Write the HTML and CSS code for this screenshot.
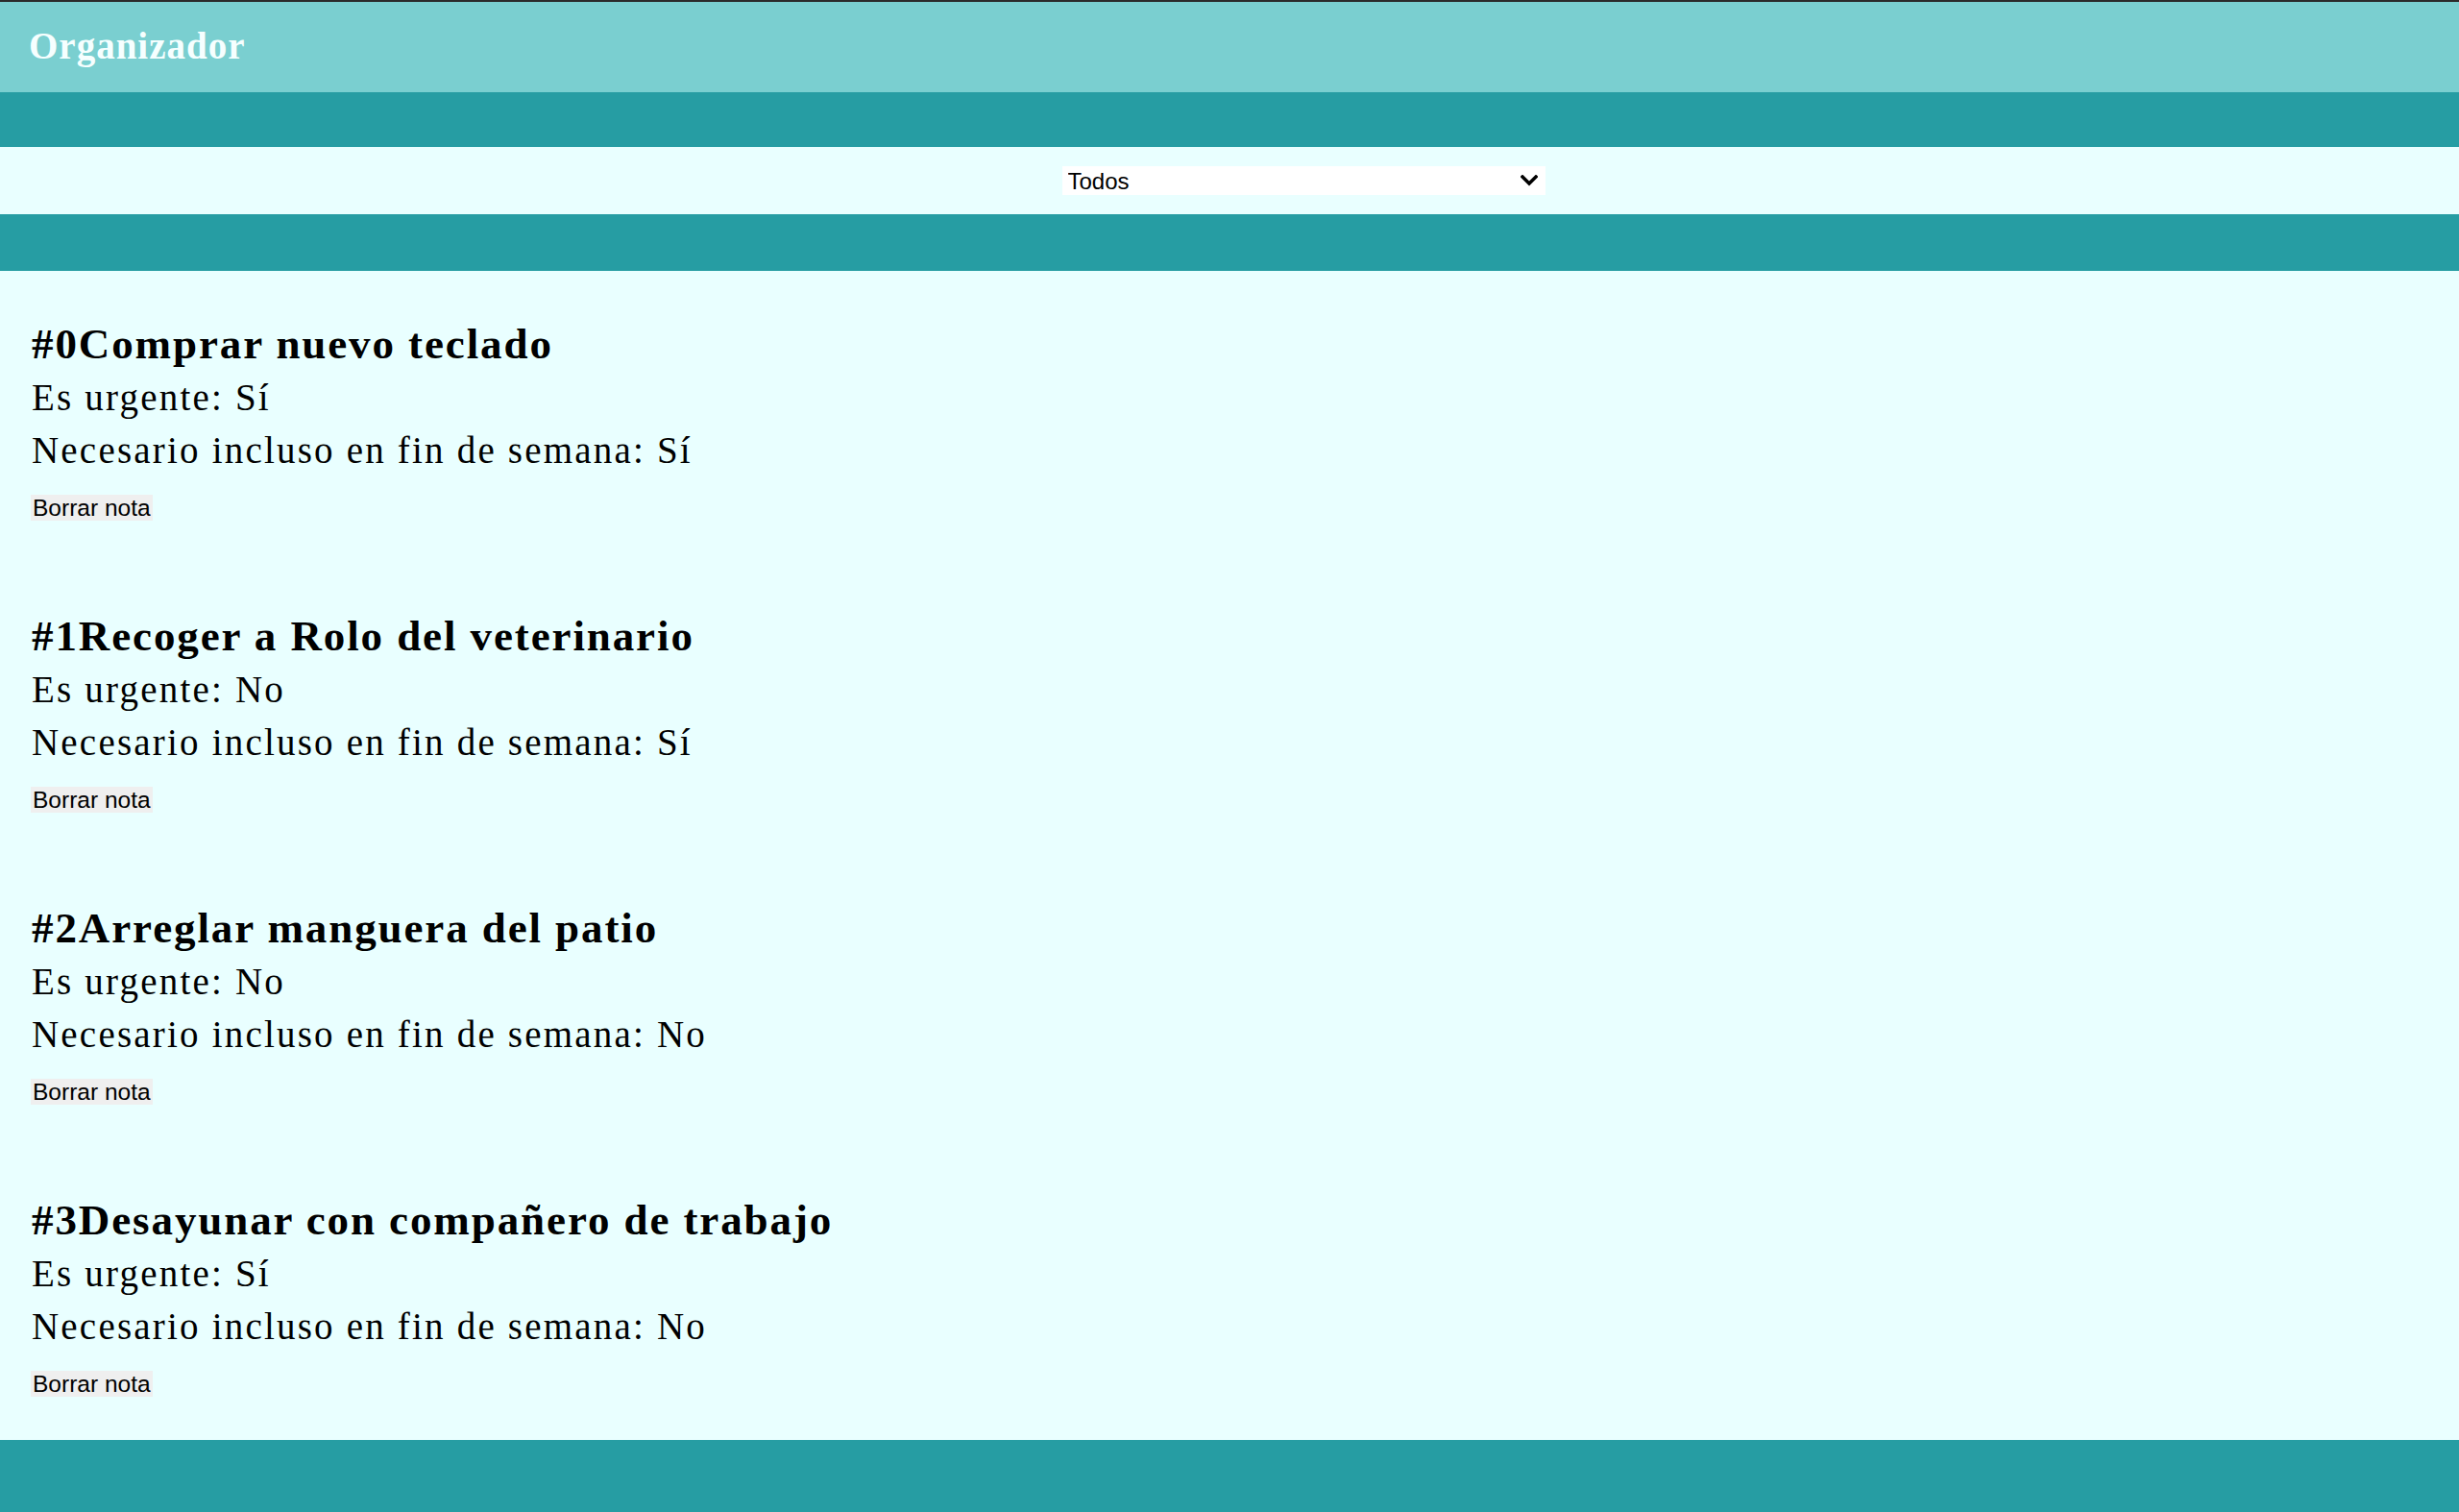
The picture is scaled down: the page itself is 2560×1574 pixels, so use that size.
FILE: index.html
```html
<!DOCTYPE html>
<html lang="es">
<head>
<meta charset="utf-8">
<title>Organizador</title>
<link rel="stylesheet" href="styles.css">
</head>
<body>
<header class="topbar">
  <h1 class="brand">Organizador</h1>
</header>
<div class="band"></div>
<div class="filter">
  <div class="select-wrap">
    <select class="filter-select">
      <option>Todos</option>
      <option>Urgentes</option>
      <option>Fin de semana</option>
    </select>
    <svg class="chevron" viewBox="0 0 18 12" width="18" height="12" aria-hidden="true"><path d="M2 2 L9 9 L16 2" fill="none" stroke="#000" stroke-width="3.4" stroke-linecap="square"/></svg>
  </div>
</div>
<div class="band band-low"></div>
<main class="notes">
  <article class="note">
    <h2 class="note-title">#0Comprar nuevo teclado</h2>
    <p class="note-line">Es urgente: Sí</p>
    <p class="note-line">Necesario incluso en fin de semana: Sí</p>
    <button class="btn">Borrar nota</button>
  </article>
  <article class="note">
    <h2 class="note-title">#1Recoger a Rolo del veterinario</h2>
    <p class="note-line">Es urgente: No</p>
    <p class="note-line">Necesario incluso en fin de semana: Sí</p>
    <button class="btn">Borrar nota</button>
  </article>
  <article class="note">
    <h2 class="note-title">#2Arreglar manguera del patio</h2>
    <p class="note-line">Es urgente: No</p>
    <p class="note-line">Necesario incluso en fin de semana: No</p>
    <button class="btn">Borrar nota</button>
  </article>
  <article class="note">
    <h2 class="note-title">#3Desayunar con compañero de trabajo</h2>
    <p class="note-line">Es urgente: Sí</p>
    <p class="note-line">Necesario incluso en fin de semana: No</p>
    <button class="btn">Borrar nota</button>
  </article>
</main>
<footer class="footer"></footer>
</body>
</html>
```
FILE: styles.css
```css
html, body {
  margin: 0;
  padding: 0;
}
body {
  background: #e9ffff;
  font-family: "Liberation Serif", "Times New Roman", serif;
  color: #000;
  border-top: 2px solid #2b2b2b;
  min-height: 1572px;
  display: flex;
  flex-direction: column;
}
.topbar {
  background: #7acfd0;
  height: 94px;
  display: flex;
  align-items: center;
  padding-left: 30px;
}
.brand {
  margin: 0;
  color: #f6ffff;
  font-size: 39px;
  font-weight: 700;
  letter-spacing: 1px;
  line-height: 1;
  padding-bottom: 4px;
}
.band {
  background: #269da3;
  height: 57px;
}
.band-low {
  height: 59px;
}
.filter {
  height: 70px;
  display: flex;
  justify-content: center;
  align-items: center;
  padding-left: 154px;
  box-sizing: border-box;
}
.select-wrap {
  position: relative;
  width: 503px;
  height: 30px;
}
.filter-select {
  appearance: none;
  -webkit-appearance: none;
  width: 100%;
  height: 30px;
  border: none;
  border-radius: 0;
  background: #fff;
  font-family: "Liberation Sans", Arial, sans-serif;
  font-size: 24px;
  color: #000;
  padding: 0 0 0 6px;
  outline: none;
}
.chevron {
  position: absolute;
  right: 8px;
  top: 9px;
  pointer-events: none;
}
.notes {
  padding-top: 1px;
  flex: 1;
}
.note {
  padding: 48px 33px 45px 32px;
}
.note-title {
  margin: 0 0 0 1px;
  font-size: 45px;
  font-weight: 700;
  letter-spacing: 1.9px;
  line-height: 55px;
}
.note-line {
  margin: 0 0 0 1px;
  font-size: 39px;
  letter-spacing: 2.2px;
  line-height: 55px;
}
.btn {
  margin-top: 19px;
  display: block;
  height: 27px;
  border: none;
  border-radius: 0;
  background: #efefef;
  font-family: "Liberation Sans", Arial, sans-serif;
  font-size: 24.5px;
  line-height: 27px;
  padding: 0 2px;
  color: #000;
}
.footer {
  background: #269da3;
  height: 75px;
}
```
